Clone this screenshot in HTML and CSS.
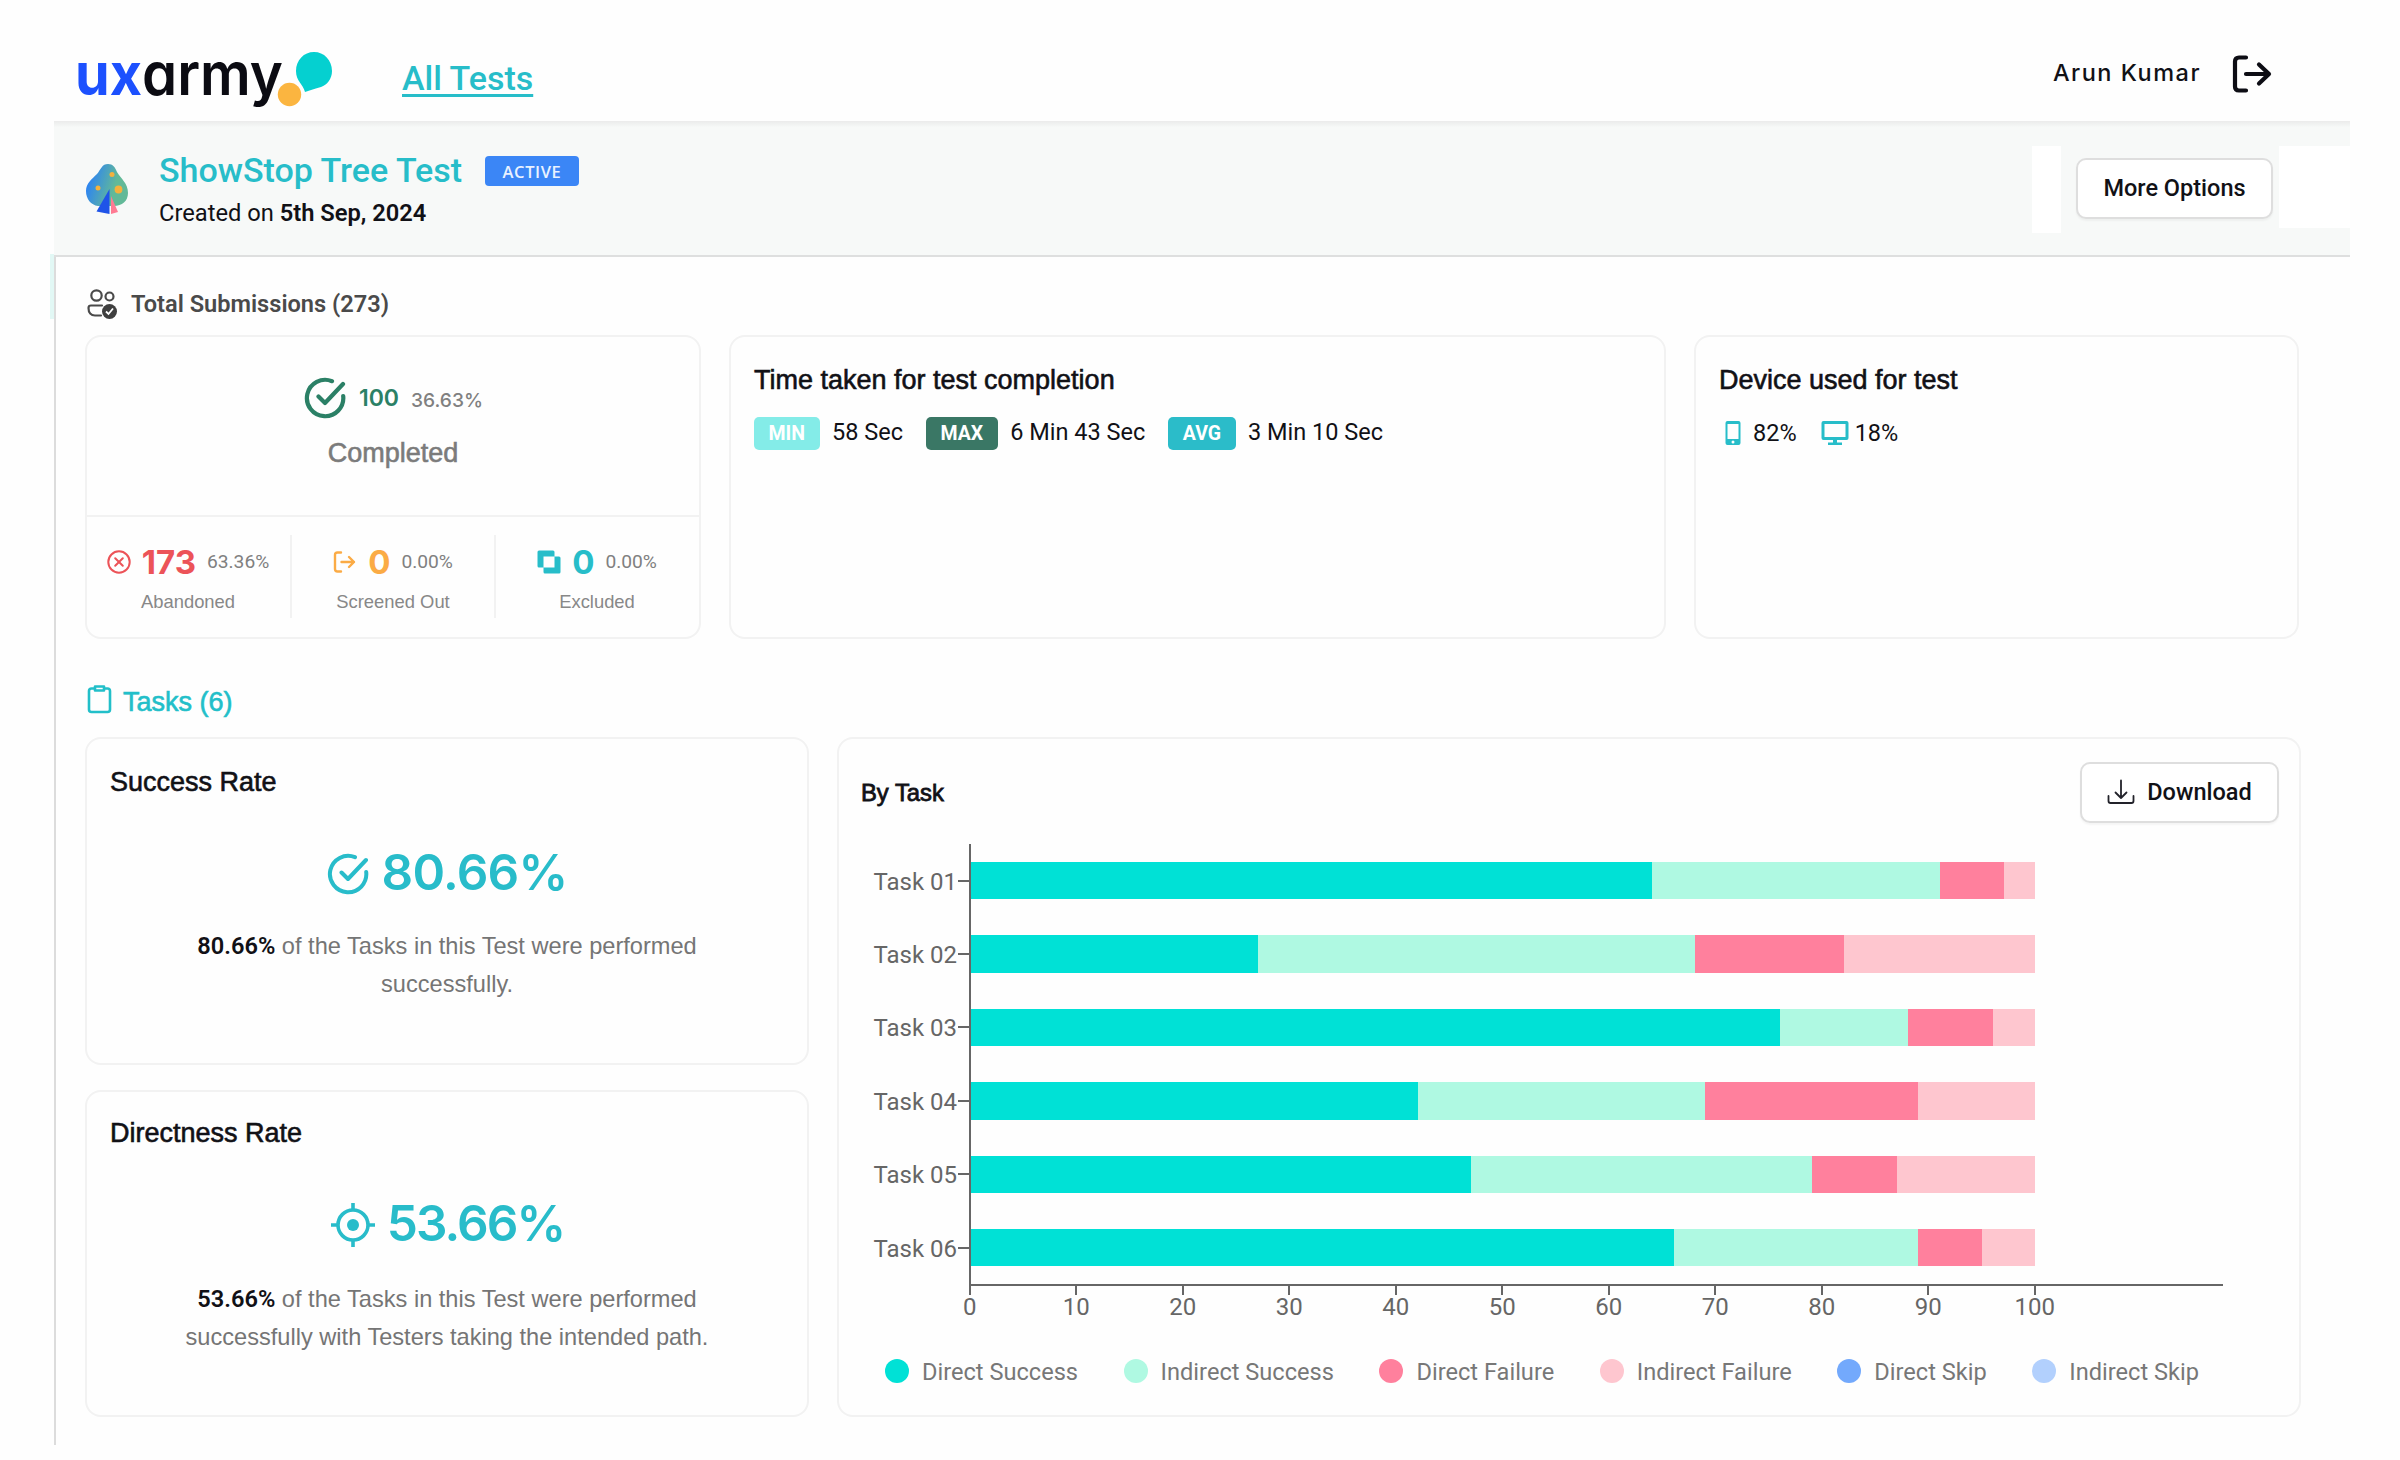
FILE: index.html
```html
<!DOCTYPE html>
<html lang="en">
<head>
    <meta charset="UTF-8">
    <meta name="viewport" content="width=device-width, initial-scale=1.0">
    <title>ShowStop Tree Test</title>
    <link rel="stylesheet" href="styles.css">
</head>
<body>
    <header class="topbar">
        <svg class="logo" width="262" height="64" viewBox="0 0 262 64">
            <text class="logo-ux" x="-1" y="46" textLength="67" lengthAdjust="spacingAndGlyphs">ux</text>
            <text class="logo-army" x="66" y="46" textLength="141" lengthAdjust="spacingAndGlyphs">army</text>
            <circle cx="213.500" cy="45.500" r="11.700" fill="#fbb540"/>
            <path d="M229 43C227 35 220 32 220 22C220 11 228 3 238 3C248 3 256 11 256 22C256 30 251 36 245 38C239 40 234 41 229 43Z" fill="#05d0d0"/>
        </svg>
        <a class="nav-link" href="#">All Tests</a>
        <div class="user">
            <span class="user-name">Arun Kumar</span>
            <svg class="logout" width="42" height="42" viewBox="0 0 42 42" fill="none" stroke="#0d0d14" stroke-width="4.200" stroke-linecap="round" stroke-linejoin="round">
                <path d="M15 4.500H8Q4 4.500 4 8.500V33.500Q4 37.500 8 37.500H15M15 21H38M28 11.500L38 21L28 30.500"/>
            </svg>
        </div>
    </header>

    <section class="test-header">
        <svg class="tree" width="46" height="54" viewBox="0 0 46 54">
            <defs>
                <linearGradient id="leaf" x1="0" y1="0.300" x2="1" y2="0.600">
                    <stop offset="0.100" stop-color="#2f86ef"/>
                    <stop offset="0.700" stop-color="#62b998"/>
                </linearGradient>
            </defs>
            <path d="M24 2C29 2 31 5 33 10C37 17 44 21 44 31C44 39 38 44 30 44H14C7 43 2 37 2 29C2 21 8 17 13 12C17 7 18 2 24 2Z" fill="url(#leaf)"/>
            <path d="M25.500 27V52L12.500 49.500Z" fill="#1f54e8"/>
            <path d="M27 34L34 50L27 52Z" fill="#ff7b93"/>
            <circle cx="28" cy="12.500" r="2.500" fill="#f5b13d"/>
            <circle cx="14" cy="26" r="2.500" fill="#f5b13d"/>
            <circle cx="34.500" cy="27.500" r="3.900" fill="#f5b13d"/>
        </svg>
        <div class="test-info">
            <div class="test-title-row">
                <h1 class="test-title">ShowStop Tree Test</h1>
                <span class="status">ACTIVE</span>
            </div>
            <p class="test-date">Created on <b>5th Sep, 2024</b></p>
        </div>
        <div class="toolbar">
            <div class="toolbar-pad"></div>
            <div class="toolbar-cell">
                <button class="btn more-btn">More Options</button>
            </div>
            <div class="toolbar-pad toolbar-pad-wide"></div>
        </div>
    </section>

    <main class="content">
        <h2 class="section-title">
            <svg width="32" height="32" viewBox="0 0 32 32" fill="none" stroke="#4a4a4a" stroke-width="2.200">
                <circle cx="10.500" cy="7.500" r="5.200"/>
                <circle cx="23.500" cy="8.500" r="4"/>
                <path d="M16 17.500H5Q2.500 17.500 2.500 20C2.500 25 5 27.500 9 27.500H15" stroke-linecap="round"/>
                <circle cx="23.500" cy="23.500" r="7.500" fill="#3f3f3f" stroke="none"/>
                <path d="M20 23.500L22.500 26L27 20.500" stroke="#fff" stroke-width="1.800"/>
            </svg>
            Total Submissions (273)
        </h2>

        <div class="cards">
            <div class="card submissions">
                <div class="completed">
                    <div class="completed-row">
                        <svg width="44" height="44" viewBox="0 0 44 44" fill="none" stroke="#2b8066" stroke-width="4.200" stroke-linecap="round" stroke-linejoin="round">
                            <path d="M29 5.200A18.200 18.200 0 1 0 40.200 20M15.500 20.500L22 27L40 8"/>
                        </svg>
                        <span class="completed-count">100</span>
                        <span class="completed-pct">36.63%</span>
                    </div>
                    <div class="completed-label">Completed</div>
                </div>
                <div class="stats">
                    <div class="stat stat-abandoned">
                        <div class="stat-row">
                            <svg width="24" height="24" viewBox="0 0 24 24" fill="none" stroke="#ec5358" stroke-width="2" stroke-linecap="round">
                                <circle cx="12" cy="12" r="10.700"/>
                                <path d="M8.200 8.200L15.800 15.800M15.800 8.200L8.200 15.800"/>
                            </svg>
                            <span class="stat-count">173</span>
                            <span class="stat-pct">63.36%</span>
                        </div>
                        <div class="stat-label">Abandoned</div>
                    </div>
                    <div class="stat stat-screened">
                        <div class="stat-row">
                            <svg width="24" height="24" viewBox="0 0 24 24" fill="none" stroke="#fbab45" stroke-width="2.400" stroke-linecap="round" stroke-linejoin="round">
                                <path d="M8 2.500H4.500Q2 2.500 2 5V19Q2 21.500 4.500 21.500H8M8.500 12H21M16 7L21 12L16 17"/>
                            </svg>
                            <span class="stat-count">0</span>
                            <span class="stat-pct">0.00%</span>
                        </div>
                        <div class="stat-label">Screened Out</div>
                    </div>
                    <div class="stat stat-excluded">
                        <div class="stat-row">
                            <svg width="24" height="24" viewBox="0 0 24 24" fill="#27bdc9">
                                <path fill-rule="evenodd" d="M2 0.500H16Q17.500 0.500 17.500 2V6.500H22Q23.500 6.500 23.500 8V22Q23.500 23.500 22 23.500H8Q6.500 23.500 6.500 22V17.500H2Q0.500 17.500 0.500 16V2Q0.500 0.500 2 0.500ZM6.500 6.500V17.500H17.500V6.500Z"/>
                            </svg>
                            <span class="stat-count">0</span>
                            <span class="stat-pct">0.00%</span>
                        </div>
                        <div class="stat-label">Excluded</div>
                    </div>
                </div>
            </div>

            <div class="card time">
                <h3 class="card-title">Time taken for test completion</h3>
                <div class="time-row">
                    <span class="tag tag-min">MIN</span>
                    <span class="time-value">58 Sec</span>
                    <span class="tag tag-max">MAX</span>
                    <span class="time-value">6 Min 43 Sec</span>
                    <span class="tag tag-avg">AVG</span>
                    <span class="time-value">3 Min 10 Sec</span>
                </div>
            </div>

            <div class="card device">
                <h3 class="card-title">Device used for test</h3>
                <div class="device-row">
                    <svg class="phone" width="16" height="26" viewBox="0 0 16 26">
                        <path fill="#27bdc9" fill-rule="evenodd" d="M2.500 1H13.500Q15.500 1 15.500 3V23Q15.500 25 13.500 25H2.500Q0.500 25 0.500 23V3Q0.500 1 2.500 1ZM2.500 4V19H13.500V4Z"/>
                        <circle cx="8" cy="22" r="1.500" fill="#fff"/>
                    </svg>
                    <span>82%</span>
                    <svg class="monitor" width="28" height="26" viewBox="0 0 28 26">
                        <path fill="#27bdc9" fill-rule="evenodd" d="M2.500 1H25.500Q27.500 1 27.500 3V18Q27.500 20 25.500 20H16V22.500H21V25H7V22.500H12V20H2.500Q0.500 20 0.500 18V3Q0.500 1 2.500 1ZM3.500 4V17H24.500V4Z"/>
                    </svg>
                    <span>18%</span>
                </div>
            </div>
        </div>

        <h2 class="tasks-title">
            <svg width="26" height="30" viewBox="0 0 26 30" fill="none" stroke="#22bfc9" stroke-width="2.600" stroke-linejoin="round">
                <path d="M8.500 4.500H5.500Q3 4.500 3 7V25.500Q3 28 5.500 28H21.500Q24 28 24 25.500V7Q24 4.500 21.500 4.500H18.500M9 2.500H18V6.500H9Z"/>
            </svg>
            Tasks (6)
        </h2>

        <div class="tasks">
            <div class="rates">
                <div class="card rate">
                    <h3 class="card-title">Success Rate</h3>
                    <div class="rate-value">
                        <svg width="44" height="44" viewBox="0 0 44 44" fill="none" stroke="#28bcca" stroke-width="4" stroke-linecap="round" stroke-linejoin="round">
                            <path d="M29 5.200A18.200 18.200 0 1 0 40.200 20M15.500 20.500L22 27L40 8"/>
                        </svg>
                        <span>80.66%</span>
                    </div>
                    <p class="rate-text"><b>80.66%</b> of the Tasks in this Test were performed<br>successfully.</p>
                </div>
                <div class="card rate rate-direct">
                    <h3 class="card-title">Directness Rate</h3>
                    <div class="rate-value">
                        <svg width="46" height="46" viewBox="0 0 46 46" fill="none" stroke="#28bcca" stroke-width="3.600">
                            <circle cx="23" cy="23" r="15"/>
                            <path d="M23 1V8M23 38V45M1 23H8M38 23H45"/>
                            <circle cx="23" cy="23" r="6" fill="#28bcca" stroke="none"/>
                        </svg>
                        <span>53.66%</span>
                    </div>
                    <p class="rate-text"><b>53.66%</b> of the Tasks in this Test were performed<br>successfully with Testers taking the intended path.</p>
                </div>
            </div>

            <div class="card chart-card">
                <div class="chart-head">
                    <h3 class="chart-title">By Task</h3>
                    <button class="btn download-btn">
                        <svg width="28" height="26" viewBox="0 0 28 26" fill="none" stroke="#22222a" stroke-width="1.800" stroke-linecap="round" stroke-linejoin="round">
                            <path d="M14 1.500V19M8.500 13.500L14 19L19.500 13.500M1.500 17V22Q1.500 24 3.500 24H24.500Q26.500 24 26.500 22V17"/>
                        </svg>
                        Download
                    </button>
                </div>
                <div class="chart" id="chart"></div>
                <div class="x-axis" id="xAxis"></div>
                <div class="legend">
                    <span class="legend-item"><i class="dot direct-success"></i>Direct Success</span>
                    <span class="legend-item"><i class="dot indirect-success"></i>Indirect Success</span>
                    <span class="legend-item"><i class="dot direct-failure"></i>Direct Failure</span>
                    <span class="legend-item"><i class="dot indirect-failure"></i>Indirect Failure</span>
                    <span class="legend-item"><i class="dot direct-skip"></i>Direct Skip</span>
                    <span class="legend-item"><i class="dot indirect-skip"></i>Indirect Skip</span>
                </div>
            </div>
        </div>
    </main>

    <script>
        const tasks = [
            { name: 'Task 01', values: [64, 27, 6, 3] },
            { name: 'Task 02', values: [27, 41, 14, 18] },
            { name: 'Task 03', values: [76, 12, 8, 4] },
            { name: 'Task 04', values: [42, 27, 20, 11] },
            { name: 'Task 05', values: [47, 32, 8, 13] },
            { name: 'Task 06', values: [66, 23, 6, 5] }
        ];
        const series = ['direct-success', 'indirect-success', 'direct-failure', 'indirect-failure'];

        document.getElementById('chart').innerHTML = tasks.map(task =>
            `<div class="chart-row">
                <span class="y-label">${task.name}</span>
                <div class="plot">
                    <div class="bar">${task.values.map((value, i) =>
                        `<div class="${series[i]}" style="width: ${value}%"></div>`).join('')}</div>
                </div>
            </div>`
        ).join('');

        let ticks = '';
        for (let value = 0; value <= 100; value += 10) {
            ticks += `<span class="x-tick">${value}</span>`;
        }
        document.getElementById('xAxis').innerHTML = ticks;
    </script>
</body>
</html>
```

FILE: styles.css
```css
* {
    margin: 0;
    padding: 0;
    box-sizing: border-box;
}

body {
    font-family: Roboto, "Liberation Sans", sans-serif;
    background-color: #fefefe;
    color: #111116;
    height: 1460px;
    overflow: hidden;
}

svg {
    display: block;
    flex-shrink: 0;
}

b {
    font-weight: 600;
}

/* Top bar */
.topbar {
    display: flex;
    align-items: flex-start;
    height: 121px;
    padding: 49px 127px 0 76px;
}

.logo {
    overflow: visible;
}

.logo-ux,
.logo-army {
    font-family: Inter, sans-serif;
    font-size: 59px;
    font-weight: 700;
    font-feature-settings: "cv11";
    fill: #1c50fe;
}

.logo-army {
    font-weight: 600;
    fill: #0b0b12;
}

.nav-link {
    margin: 9px 0 0 64px;
    font-size: 34px;
    font-weight: 500;
    line-height: 40px;
    color: #27bdc9;
    text-decoration-thickness: 2.5px;
    text-underline-offset: 4px;
}

.user {
    display: flex;
    align-items: center;
    margin: 4px 0 0 auto;
}

.user-name {
    margin: -3px 30px 0 0;
    font-family: Inter, sans-serif;
    font-size: 23.5px;
    font-weight: 500;
    letter-spacing: 1.5px;
}

/* Test header */
.test-header {
    display: flex;
    align-items: flex-start;
    width: 2296px;
    height: 136px;
    margin-left: 54px;
    padding-left: 30px;
    background: linear-gradient(#ebebeb, #f2f4f3 4px, #f7f9f8 6px);
    border-bottom: 2px solid #dedfdf;
}

.tree {
    margin-top: 41px;
}

.test-info {
    margin: 29px 0 0 29px;
}

.test-title-row {
    display: flex;
    align-items: center;
    gap: 23px;
}

.test-title {
    font-size: 34px;
    font-weight: 500;
    line-height: 40px;
    color: #27bdc9;
}

.status {
    height: 30px;
    margin-top: 2px;
    padding: 0 17.5px;
    background-color: #3b86f6;
    border-radius: 4px;
    color: #e9f2ff;
    font-family: "Open Sans", sans-serif;
    font-size: 16.5px;
    font-weight: 600;
    letter-spacing: 0.6px;
    line-height: 31px;
}

.test-date {
    font-size: 23.7px;
    line-height: 28px;
    margin-top: 9px;
}

.toolbar {
    display: flex;
    margin: 25px 0 0 auto;
}

.toolbar-pad {
    width: 29px;
    height: 87px;
    background-color: #fff;
}

.toolbar-pad-wide {
    width: 71px;
    height: 82px;
}

.toolbar-cell {
    width: 218px;
    padding: 12px 0 0 15px;
}

.btn {
    display: flex;
    align-items: center;
    justify-content: center;
    height: 61px;
    padding-bottom: 2px;
    background-color: #fff;
    border: 2px solid #dedede;
    border-radius: 10px;
    box-shadow: 0 2px 2px rgba(0, 0, 0, 0.04);
    color: #111116;
    font-family: inherit;
    font-size: 23.5px;
    font-weight: 500;
}

.more-btn {
    width: 197px;
}

/* Content */
.content {
    position: relative;
    height: 1188px;
    margin-left: 54px;
    padding: 32px 0 0 29px;
    border-left: 2px solid #dcdcdc;
}

.content::before {
    content: "";
    position: absolute;
    left: -6px;
    top: -3px;
    width: 4px;
    height: 65px;
    background-color: #e2f8f5;
}

.section-title,
.tasks-title {
    display: flex;
    align-items: center;
    height: 30px;
}

.section-title {
    gap: 13px;
    margin: 0 0 16px 1px;
    font-size: 23.6px;
    font-weight: 600;
    color: #4a4a4a;
}

.tasks-title {
    gap: 11px;
    margin: 48px 0 20px 1px;
    font-family: "Liberation Sans", Arial, sans-serif;
    font-size: 27px;
    font-weight: 400;
    color: #22bfc9;
    -webkit-text-stroke: 0.6px #22bfc9;
}

.tasks-title svg {
    margin-top: -6px;
}

.cards {
    display: flex;
    gap: 28px;
}

.card {
    border: 2px solid #f2f2f2;
    border-radius: 16px;
}

.card-title {
    font-family: "Liberation Sans", Arial, sans-serif;
    font-size: 27px;
    font-weight: 400;
    line-height: 32px;
    -webkit-text-stroke: 0.6px #111116;
}

.submissions {
    width: 616px;
    height: 304px;
}

.completed {
    height: 180px;
    padding-top: 39px;
    border-bottom: 2px solid #f2f2f2;
}

.completed-row {
    display: flex;
    align-items: center;
    justify-content: center;
}

.completed-count {
    margin-left: 12px;
    font-family: Inter, sans-serif;
    font-size: 23px;
    font-weight: 600;
    color: #2b8066;
}

.completed-pct {
    margin: 3px 0 0 12px;
    font-family: Inter, sans-serif;
    font-size: 19.2px;
    font-weight: 500;
    color: #808080;
}

.completed-label {
    margin-top: 17px;
    font-family: "Liberation Sans", Arial, sans-serif;
    font-size: 27px;
    line-height: 32px;
    text-align: center;
    color: #7b7b7b;
    -webkit-text-stroke: 0.6px #7b7b7b;
}

.stats {
    display: flex;
    margin-left: -1px;
    padding-top: 18px;
}

.stat {
    width: 204px;
    height: 83px;
    padding-top: 12px;
}

.stat + .stat {
    border-left: 2px solid #f2f2f2;
}

.stat-row {
    display: flex;
    align-items: center;
    justify-content: center;
    height: 30px;
}

.stat-count {
    margin: -1px 11px 0 11px;
    font-family: Inter, sans-serif;
    font-size: 33px;
    font-weight: 700;
}

.stat-abandoned .stat-count {
    color: #ec5358;
}

.stat-screened .stat-count {
    color: #fbab45;
}

.stat-excluded .stat-count {
    color: #27bdc9;
}

.stat-pct {
    margin-top: -2px;
    font-size: 19.2px;
    color: #808080;
}

.stat-label {
    margin-top: 13px;
    font-family: "Liberation Sans", Arial, sans-serif;
    font-size: 18.4px;
    line-height: 24px;
    text-align: center;
    color: #888;
}

.time {
    width: 937px;
    padding: 27px 0 0 23px;
}

.time-row {
    display: flex;
    align-items: center;
    margin-top: 21px;
}

.tag {
    height: 33px;
    padding: 0 14.5px;
    border-radius: 5px;
    color: #fff;
    font-size: 19.5px;
    font-weight: 700;
    line-height: 34px;
}

.tag-min {
    background-color: #84ece8;
}

.tag-max {
    background-color: #3a7765;
}

.tag-avg {
    background-color: #2bbcc9;
}

.time-value {
    margin: -4px 23px 0 12.5px;
    font-size: 23.5px;
}

.device {
    width: 605px;
    padding: 27px 0 0 23px;
}

.device-row {
    display: flex;
    align-items: center;
    margin-top: 23px;
    font-size: 23.5px;
}

.phone {
    margin: 0 12px 0 6px;
}

.monitor {
    margin: 0 6px 0 24px;
}

/* Tasks */
.tasks {
    display: flex;
    gap: 28px;
}

.rates {
    display: flex;
    flex-direction: column;
    gap: 25px;
}

.rate {
    width: 724px;
    height: 328px;
    padding: 27px 23px 0;
}

.rate-direct {
    height: 327px;
    padding-top: 25px;
}

.rate-value {
    display: flex;
    align-items: center;
    justify-content: center;
    gap: 11px;
    height: 60px;
    margin-top: 46px;
    font-family: Inter, sans-serif;
    font-size: 49.5px;
    font-weight: 600;
    letter-spacing: -0.7px;
    color: #28bcca;
}

.rate-value span {
    margin-top: -4px;
}

.rate-direct .rate-value {
    letter-spacing: -1.9px;
}

.rate-text {
    margin-top: 24px;
    font-family: "Liberation Sans", Arial, sans-serif;
    font-size: 23.6px;
    line-height: 37.5px;
    text-align: center;
    color: #757575;
}

.rate-direct .rate-text {
    margin-top: 26px;
}

.rate-text b {
    font-family: Roboto, sans-serif;
    color: #111116;
}

/* Chart */
.chart-card {
    width: 1464px;
    height: 680px;
    padding: 23px 20px 0 22px;
}

.chart-head {
    display: flex;
    align-items: center;
    justify-content: space-between;
}

.chart-title {
    font-family: "Liberation Sans", Arial, sans-serif;
    font-size: 23.8px;
    font-weight: 400;
    -webkit-text-stroke: 0.8px #111116;
}

.download-btn {
    width: 199px;
    gap: 12px;
}

.chart {
    margin: 21px 0 0 -1px;
}

.chart-row {
    display: flex;
    align-items: center;
    height: 73.4px;
}

.y-label {
    width: 97px;
    padding-top: 2px;
    font-size: 24px;
    text-align: right;
    color: #666;
}

/* tick mark in front of each bar */
.plot::before {
    content: "";
    width: 11px;
    height: 2px;
    margin: 0 2px 0 -13px;
    background-color: #666;
}

.plot {
    display: flex;
    align-items: center;
    width: 1254px;
    height: 100%;
    margin-left: 12px;
    border-left: 2px solid #666;
}

.chart-row:last-child .plot {
    box-shadow: 0 2px 0 #666;
}

.bar {
    display: flex;
    width: 1064.5px;
    height: 37.5px;
}

.direct-success {
    background-color: #00e1d6;
}

.indirect-success {
    background-color: #aff9e2;
}

.direct-failure {
    background-color: #ff809d;
}

.indirect-failure {
    background-color: #fec6cf;
}

.direct-skip {
    background-color: #73a9fc;
}

.indirect-skip {
    background-color: #b2d0fd;
}

.x-axis {
    display: flex;
    margin: 2px 0 0 55.5px;
}

.x-tick {
    display: flex;
    flex-direction: column;
    align-items: center;
    width: 106.5px;
    flex-shrink: 0;
    font-size: 24px;
    line-height: 24px;
    color: #666;
}

.x-tick::before {
    content: "";
    width: 2px;
    height: 9px;
    background-color: #666;
}

.legend {
    display: flex;
    justify-content: space-between;
    margin: 38px 80px 0 24px;
}

.legend-item {
    display: flex;
    align-items: center;
    gap: 13px;
    font-size: 23.6px;
    line-height: 30px;
    color: #777;
}

.dot {
    width: 24px;
    height: 24px;
    margin-top: -2px;
    border-radius: 50%;
}
```
